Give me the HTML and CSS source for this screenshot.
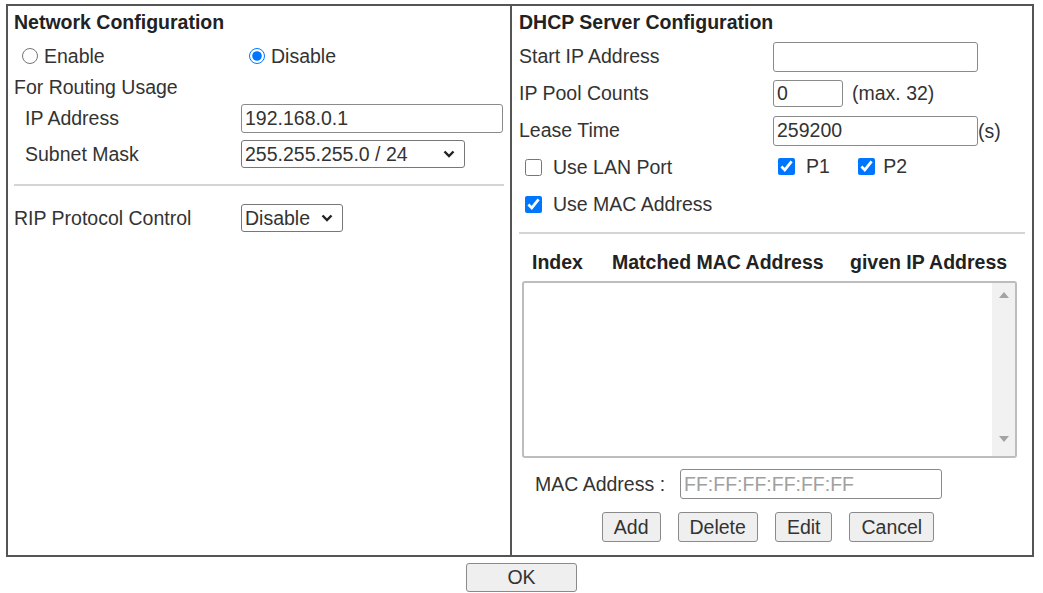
FILE: index.html
```html
<!DOCTYPE html>
<html>
<head>
<meta charset="UTF-8">
<title>LAN General Setup</title>
<link rel="stylesheet" href="styles.css">
</head>
<body>

<div class="frame">
    <div class="cell left">
        <div class="row head">Network Configuration</div>
        <div class="row pair radios">
            <label class="opt"><input type="radio" name="nc">Enable</label>
            <label class="opt"><input type="radio" name="nc" checked>Disable</label>
        </div>
        <div class="row note">For Routing Usage</div>
        <div class="row pair">
            <span class="indent">IP Address</span>
            <input class="txt ip" type="text" value="192.168.0.1">
        </div>
        <div class="row pair">
            <span class="indent">Subnet Mask</span>
            <span class="selwrap">
                <select class="sel mask">
                    <option>255.255.255.0 / 24</option>
                </select>
                <svg class="caret" width="12" height="8" viewBox="0 0 12 8"><path d="M1.5 1.5 L6 6 L10.5 1.5" fill="none" stroke="#222" stroke-width="2.4"/></svg>
            </span>
        </div>
        <hr class="sep">
        <div class="row pair">
            <span>RIP Protocol Control</span>
            <span class="selwrap">
                <select class="sel rip">
                    <option>Disable</option>
                </select>
                <svg class="caret" width="12" height="8" viewBox="0 0 12 8"><path d="M1.5 1.5 L6 6 L10.5 1.5" fill="none" stroke="#222" stroke-width="2.4"/></svg>
            </span>
        </div>
    </div>

    <div class="cell right">
        <div class="row head">DHCP Server Configuration</div>
        <div class="row wide">
            <span>Start IP Address</span>
            <input class="txt long" type="text">
        </div>
        <div class="row wide">
            <span>IP Pool Counts</span>
            <span><input class="txt count" type="text" value="0"><span class="hint">(max. 32)</span></span>
        </div>
        <div class="row wide">
            <span>Lease Time</span>
            <span><input class="txt long" type="text" value="259200">(s)</span>
        </div>
        <div class="row wide">
            <label class="chk first"><input type="checkbox">Use LAN Port</label>
            <span class="ports">
                <label class="chk"><input type="checkbox" checked>P1</label>
                <label class="chk"><input type="checkbox" checked>P2</label>
            </span>
        </div>
        <div class="row wide">
            <label class="chk first"><input type="checkbox" checked>Use MAC Address</label>
        </div>
        <hr class="sep sep-r">
        <div class="cols">
            <span>Index</span>
            <span>Matched MAC Address</span>
            <span>given IP Address</span>
        </div>
        <div class="list">
            <div class="track">
                <svg width="10" height="6" viewBox="0 0 10 6"><path d="M0 6 L5 0 L10 6 Z" fill="#a3a3a3"/></svg>
                <svg width="10" height="6" viewBox="0 0 10 6"><path d="M0 0 L5 6 L10 0 Z" fill="#a3a3a3"/></svg>
            </div>
        </div>
        <div class="row macrow">
            <span class="maclbl">MAC Address :</span>
            <input class="txt mac" type="text" placeholder="FF:FF:FF:FF:FF:FF">
        </div>
        <div class="btns">
            <button>Add</button>
            <button>Delete</button>
            <button>Edit</button>
            <button>Cancel</button>
        </div>
    </div>
</div>

<div class="foot">
    <button class="ok">OK</button>
</div>

</body>
</html>
```

FILE: styles.css
```css
* {
    box-sizing: border-box;
}
body {
    margin: 0;
    font-family: "Liberation Sans", Arial, sans-serif;
    font-size: 19.5px;
    color: #333;
    background: #fff;
}
input, select, button {
    font-family: inherit;
    font-size: 19.5px;
    color: #333;
}
.frame {
    margin: 4px 0 0 6px;
    width: 1028px;
    height: 553px;
    border: 2px solid #555;
    display: grid;
    grid-template-columns: 504px 1fr;
}
.cell {
    height: 100%;
}
.left {
    border-right: 2px solid #555;
    padding: 0 6px;
}
.right {
    padding: 0 7px;
}
.row {
    display: flex;
    align-items: center;
    height: 36px;
}
.head {
    height: 32px;
    font-weight: bold;
    color: #222;
}
.note {
    height: 26px;
}
.pair {
    display: grid;
    grid-template-columns: 227px 1fr;
}
.indent {
    padding-left: 11px;
}
.opt {
    display: flex;
    align-items: center;
}
.opt input {
    width: 16px;
    height: 16px;
    margin: 0 6px 0 8px;
}
.txt {
    height: 30px;
    border: 1px solid #8a8a8a;
    border-radius: 3px;
    padding: 0 3px;
    background: #fff;
}
.txt::placeholder {
    color: #a0a0a0;
}
.ip {
    width: 262px;
    height: 29px;
}
.selwrap {
    position: relative;
    display: inline-flex;
    align-items: center;
    justify-self: start;
}
.sel {
    -webkit-appearance: none;
    appearance: none;
    height: 28px;
    border: 1px solid #777;
    border-radius: 3px;
    background: #fff;
    padding: 0 3px;
}
.caret {
    position: absolute;
    right: 10px;
    top: 10px;
    pointer-events: none;
}
.mask {
    width: 224px;
}
.rip {
    width: 102px;
}
.sep {
    margin: 12px 0 14px;
    border: 0;
    border-top: 2px solid #d4d4d4;
    height: 0;
}
.wide {
    height: 37px;
    display: grid;
    grid-template-columns: 254px 1fr;
}
.long {
    width: 205px;
}
.count {
    width: 70px;
    height: 27px;
}
.hint {
    margin-left: 9px;
}
.chk {
    display: inline-flex;
    align-items: center;
}
.chk input {
    width: 17px;
    height: 17px;
    margin: 0 11px 0 5px;
}
.chk.first input {
    margin-left: 6px;
}
.ports .chk + .chk {
    margin-left: 18px;
}
.ports .chk + .chk input {
    margin-right: 8px;
}
.sep-r {
    margin: 9px 0 12px;
}
.cols {
    display: grid;
    grid-template-columns: 80px 238px 1fr;
    align-items: center;
    height: 32px;
    padding-left: 13px;
    font-weight: bold;
    color: #222;
}
.list {
    margin: 3px 0 0 3px;
    width: 495px;
    height: 177px;
    border: 2px solid #bdbdbd;
    border-radius: 3px;
    display: flex;
    justify-content: flex-end;
}
.track {
    width: 23px;
    background: #f1f1f1;
    display: flex;
    flex-direction: column;
    justify-content: space-between;
    align-items: center;
    padding: 9px 0 14px;
}
.macrow {
    margin-top: 10px;
    height: 32px;
    padding-left: 16px;
}
.maclbl {
    width: 145px;
}
.mac {
    width: 262px;
}
.btns {
    margin-top: 12px;
    display: flex;
    justify-content: center;
    gap: 17px;
    padding-right: 8px;
}
button {
    height: 30px;
    padding: 0 11px;
    background: #efefef;
    border: 1px solid #8a8a8a;
    border-radius: 3px;
}
.foot {
    display: flex;
    justify-content: center;
    margin-top: 6px;
}
.ok {
    width: 111px;
    height: 29px;
}
```
